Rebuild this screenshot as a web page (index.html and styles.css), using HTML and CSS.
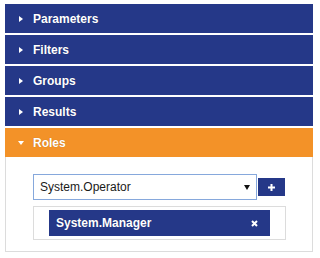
FILE: index.html
```html
<!DOCTYPE html>
<html>
<head>
<meta charset="utf-8">
<link rel="stylesheet" href="styles.css">
</head>
<body>
<div class="panel">
  <div class="hdr"><span class="caret"><span class="tri-right"></span></span><span class="title">Parameters</span></div>
  <div class="hdr"><span class="caret"><span class="tri-right"></span></span><span class="title">Filters</span></div>
  <div class="hdr"><span class="caret"><span class="tri-right"></span></span><span class="title">Groups</span></div>
  <div class="hdr"><span class="caret"><span class="tri-right"></span></span><span class="title">Results</span></div>
  <div class="hdr open"><span class="caret"><span class="tri-down"></span></span><span class="title">Roles</span></div>
  <div class="body">
    <div class="row">
      <div class="select"><span class="sel-text">System.Operator</span><span class="sel-arrow"></span></div>
      <div class="add-btn">
        <svg width="7" height="7" viewBox="0 0 7 7"><path d="M3.5 0V7M0 3.5H7" stroke="#fff" stroke-width="2"/></svg>
      </div>
    </div>
    <div class="list">
      <div class="tag"><span class="tag-text">System.Manager</span>
        <svg class="tag-x" width="7" height="7" viewBox="0 0 7 7"><path d="M1 1L6 6M6 1L1 6" stroke="#fff" stroke-width="2"/></svg>
      </div>
    </div>
  </div>
</div>
</body>
</html>
```
FILE: styles.css
```css
html, body {
  margin: 0;
  padding: 0;
  background: #fff;
  font-family: "Liberation Sans", Arial, sans-serif;
}
.panel {
  width: 308px;
  margin: 4px 0 0 5px;
}
.hdr {
  height: 29px;
  margin-bottom: 2px;
  background: #253888;
  color: #fff;
  display: flex;
  align-items: center;
  font-size: 12px;
  font-weight: bold;
}
.hdr.open {
  background: #f39228;
  margin-bottom: 0;
}
.caret {
  width: 7px;
  margin-left: 12px;
  margin-right: 9px;
  display: flex;
  justify-content: center;
  align-items: center;
}
.tri-right {
  width: 0;
  height: 0;
  border-left: 4px solid #fff;
  border-top: 3.5px solid transparent;
  border-bottom: 3.5px solid transparent;
}
.tri-down {
  width: 0;
  height: 0;
  border-top: 4px solid #fff;
  border-left: 3.5px solid transparent;
  border-right: 3.5px solid transparent;
}
.title {
  text-shadow: 0 0 1px rgba(0,0,0,0.25);
}
.body {
  border: 1px solid #dcdcdc;
  border-top: none;
  padding: 17px 0 11px 27px;
}
.row {
  display: flex;
  align-items: center;
}
.select {
  box-sizing: border-box;
  width: 224px;
  height: 26px;
  border: 1px solid #86a8dc;
  display: flex;
  align-items: center;
  padding: 0 6px 0 6px;
  font-size: 12px;
  color: #1a1a1a;
}
.sel-text {
  flex: 1;
}
.sel-arrow {
  width: 0;
  height: 0;
  border-top: 5px solid #111;
  border-left: 3px solid transparent;
  border-right: 3px solid transparent;
  margin-top: 1px;
}
.add-btn {
  width: 27px;
  height: 18px;
  margin-left: 1px;
  background: #253888;
  display: flex;
  align-items: center;
  justify-content: center;
}
.add-btn svg {
  display: block;
}
.list {
  box-sizing: border-box;
  width: 253px;
  margin-top: 6px;
  border: 1px solid #dcdcdc;
  padding: 3px 0 3px 15px;
}
.tag {
  width: 221px;
  height: 26px;
  box-sizing: border-box;
  background: #253888;
  color: #fff;
  font-size: 12px;
  font-weight: bold;
  display: flex;
  align-items: center;
  padding: 0 12px 0 7px;
}
.tag-text {
  flex: 1;
  text-shadow: 0 0 1px rgba(0,0,0,0.25);
}
.tag-x {
  display: block;
}
```
